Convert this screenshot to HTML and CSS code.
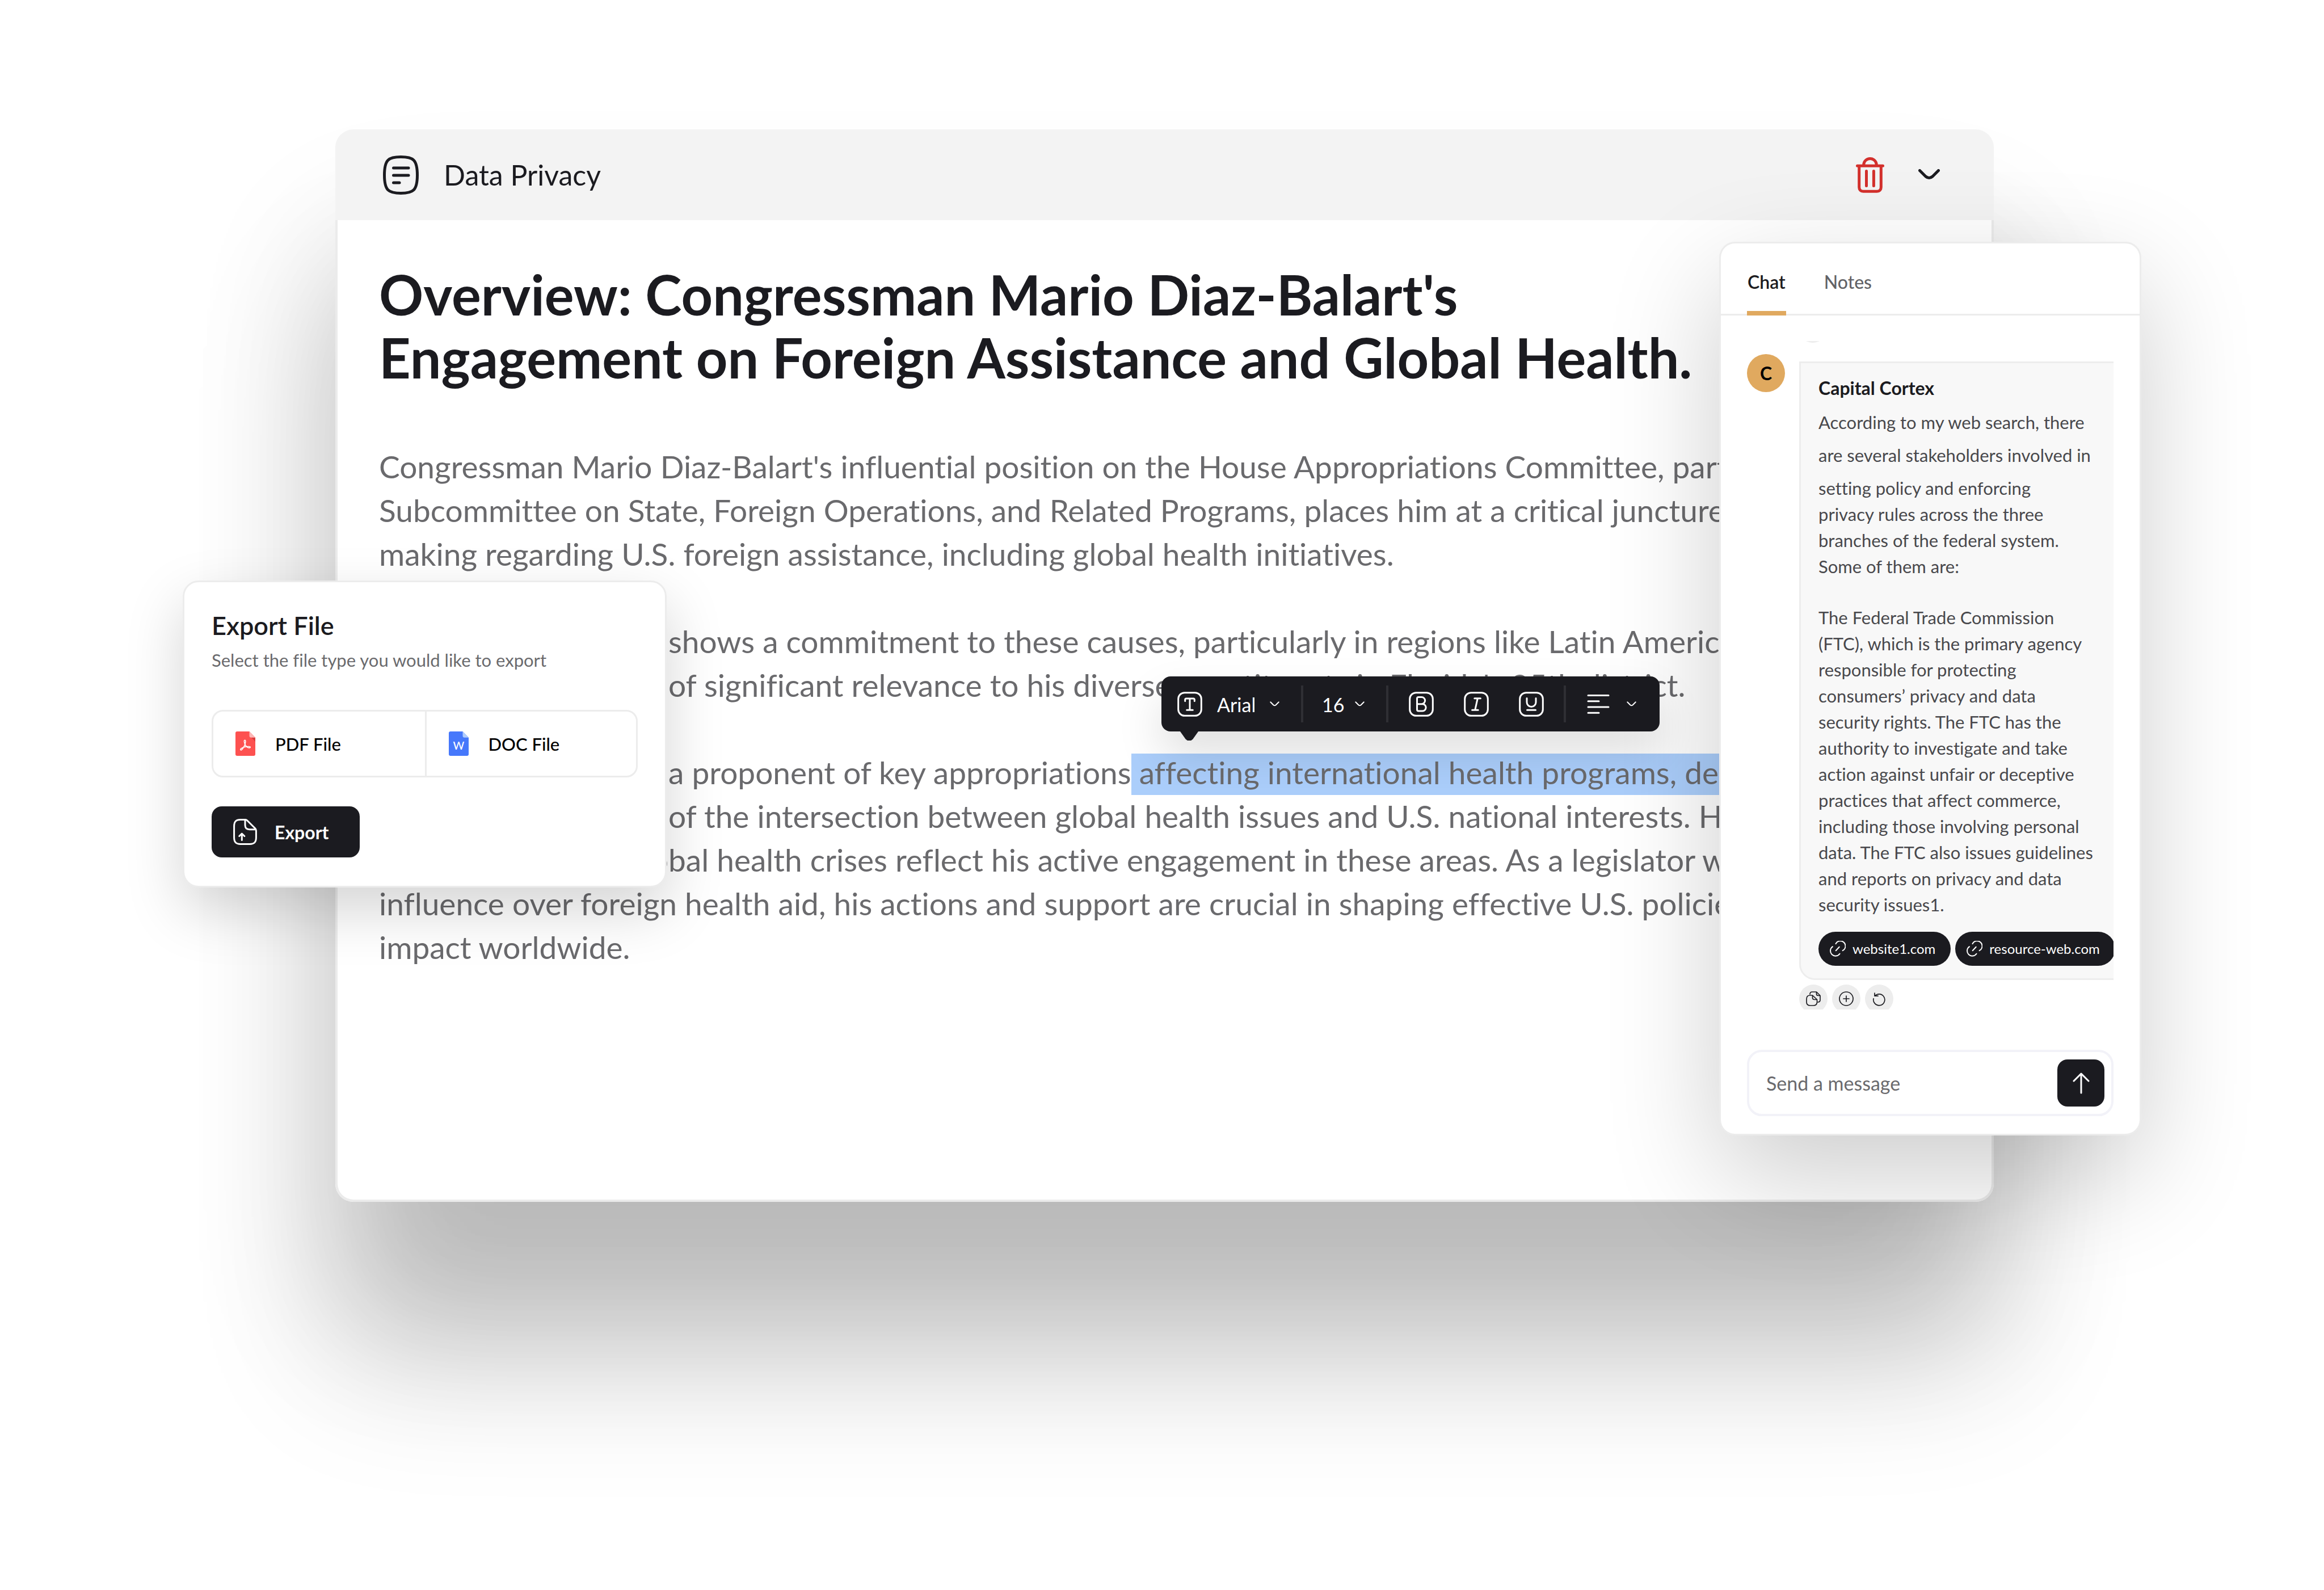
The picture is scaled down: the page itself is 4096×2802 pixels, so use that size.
FILE: index.html
```html
<!DOCTYPE html>
<html lang="en">
<head>
<meta charset="utf-8">
<meta name="viewport" content="width=device-width, initial-scale=1">
<title>Data Privacy</title>
<link rel="stylesheet" href="styles.css">
</head>
<body>
<main class="scene">

  <article class="window">
    <header class="window-bar">
      <svg class="icon" width="63" height="69" viewBox="0 0 63 69" stroke-width="5"><path d="M31.500 2.500C53 2.500 60.500 7 60.500 34.500S53 66.500 31.500 66.500 2.500 62 2.500 34.500 10 2.500 31.500 2.500z"/><path d="M18.500 22H45M18.500 35H45M18.500 48H29"/></svg>
      <span class="window-title">Data Privacy</span>
      <button class="plain danger" type="button" aria-label="Delete">
        <svg class="icon" width="50" height="63" viewBox="0 0 50 63" stroke-width="5"><path d="M13.700 14.500v-1a11.300 11 0 0 1 22.600 0v1M2.500 15.200h45M5.700 15.200V53c0 4.500 2.700 7.200 7.200 7.200h24.200c4.500 0 7.200-2.700 7.200-7.200V15.200M18.500 24.600v26M31.400 24.600v26"/></svg>
      </button>
      <button class="plain" type="button" aria-label="Collapse">
        <svg class="icon" width="38" height="20" viewBox="0 0 38 20" stroke-width="5"><path d="M2.500 2.500L13 13q6 5 12 0L35.500 2.500"/></svg>
      </button>
    </header>
    <div class="document">
      <h1>Overview: Congressman Mario Diaz-Balart's<br>Engagement on Foreign Assistance and Global Health.</h1>
      <p>Congressman Mario Diaz-Balart's influential position on the House Appropriations Committee, particularly<br>
      Subcommittee on State, Foreign Operations, and Related Programs, places him at a critical juncture of<br>
      making regarding U.S. foreign assistance, including global health initiatives.</p>
      <p><span class="lead">His record </span>shows a commitment to these causes, particularly in regions like Latin America<br>
      <span class="lead">an area </span>of significant relevance to his diverse constituents in Florida's 25th district.</p>
      <p><span class="lead">He has been </span>a proponent of key appropriations<mark> affecting international health programs, demon</mark><br>
      <span class="lead">a grasp </span>of the intersection between global health issues and U.S. national interests. His views<br>
      <span class="lead">on glo</span>bal health crises reflect his active engagement in these areas. As a legislator with<br>
      influence over foreign health aid, his actions and support are crucial in shaping effective U.S. policies that<br>
      impact worldwide.</p>
    </div>
  </article>

  <div class="toolbar" role="toolbar" aria-label="Text formatting">
    <div class="tool-group">
      <svg class="icon" width="44" height="44" viewBox="0 0 44 44" stroke-width="3"><rect x="1.700" y="1.700" width="40.600" height="40.600" rx="11"/><path d="M13.700 16.500v-2.500q0-2 2-2h12.600q2 0 2 2v2.500M22 12v20M16.700 32.200h10.600"/></svg>
      <label class="picker"><select class="font-select" aria-label="Font"><option>Arial</option></select>
        <svg class="icon" width="17" height="9" viewBox="0 0 17 9" stroke-width="2"><path d="M1.300 1.300L6.500 6.500q2 1.600 4 0L15.700 1.300"/></svg></label>
    </div>
    <div class="tool-group">
      <label class="picker size"><select class="size-select" aria-label="Font size"><option>16</option></select>
        <svg class="icon" width="17" height="9" viewBox="0 0 17 9" stroke-width="2"><path d="M1.300 1.300L6.500 6.500q2 1.600 4 0L15.700 1.300"/></svg></label>
    </div>
    <div class="tool-group styles">
      <button class="plain" type="button" aria-label="Bold"><svg class="icon" width="44" height="44" viewBox="0 0 44 44" stroke-width="3"><rect x="1.700" y="1.700" width="40.600" height="40.600" rx="11"/><path d="M14.500 21.700V12q0-2.500 2.500-2.500h5.500a6 6 0 0 1 0 12.200zM14.500 21.700h9.500a6 6 0 0 1 0 12.300H17q-2.500 0-2.500-2.500z"/></svg></button>
      <button class="plain" type="button" aria-label="Italic"><svg class="icon" width="44" height="44" viewBox="0 0 44 44" stroke-width="3"><rect x="1.700" y="1.700" width="40.600" height="40.600" rx="11"/><path d="M18.800 11.700h10.600M14.600 32.300h10.600M24.300 11.700L19.700 32.300"/></svg></button>
      <button class="plain" type="button" aria-label="Underline"><svg class="icon" width="44" height="44" viewBox="0 0 44 44" stroke-width="3"><rect x="1.700" y="1.700" width="40.600" height="40.600" rx="11"/><path d="M14 11.500V18.500a8 8 0 0 0 16 0V11.500M14.500 32.200h15"/></svg></button>
    </div>
    <div class="tool-group alignment">
      <button class="plain" type="button" aria-label="Alignment">
        <svg class="icon" width="40" height="36" viewBox="0 0 40 36" stroke-width="3"><path d="M2 2.500h36M2 12.700h19M2 22.900h36M2 33.200h19"/></svg>
        <svg class="icon" width="17" height="9" viewBox="0 0 17 9" stroke-width="2"><path d="M1.300 1.300L6.500 6.500q2 1.600 4 0L15.700 1.300"/></svg>
      </button>
    </div>
  </div>

  <section class="card export">
    <h2>Export File</h2>
    <p>Select the file type you would like to export</p>
    <div class="file-types">
      <button type="button">
        <svg width="35" height="43" viewBox="0 0 35 43"><path fill="#fd5150" d="M3 0h21.500L35 10.800V40a3 3 0 0 1-3 3H3a3 3 0 0 1-3-3V3a3 3 0 0 1 3-3z"/><path fill="#d93d3d" d="M28 10.800h7V18z"/><path fill="#fdb7b6" d="M24.500 0L35 10.800h-7.500a3 3 0 0 1-3-3z"/><path fill="none" stroke="#fff" stroke-width="1.600" stroke-linejoin="round" d="M16.800 22.500c-2-4.500-1.700-7.300-.2-7.300s1.700 3.300.2 7.300c-1.600 4.300-4 8.300-5.800 9.900-1.500 1.300-3.300-.3-1.500-2 2-1.700 5.500-3 8.700-3.500 3.500-.6 8-.7 8 .8s-3.700 1.500-5.700 0-2.700-3.200-3.700-5.200z"/></svg>
        PDF File
      </button>
      <button type="button">
        <svg width="35" height="43" viewBox="0 0 35 43"><path fill="#4678fb" d="M3 0h21.500L35 10.800V40a3 3 0 0 1-3 3H3a3 3 0 0 1-3-3V3a3 3 0 0 1 3-3z"/><path fill="#b0cdfc" d="M24.500 0L35 10.800h-7.500a3 3 0 0 1-3-3z"/><text class="doc-letter" x="17.500" y="32" text-anchor="middle">W</text></svg>
        DOC File
      </button>
    </div>
    <button class="export-button" type="button">
      <svg class="icon" width="42" height="46" viewBox="0 0 42 46" stroke-width="3"><path d="M21.500 1.600H12.500C5 1.600 1.600 5 1.600 13V33c0 8 3.400 11.400 10.900 11.400h17c7.500 0 10.900-3.400 10.900-11.400V21c0-1.500-.5-3-1.500-4L24.500 2.800c-.8-.8-1.800-1.200-3-1.200zM21 2v9c0 5 2.500 7.700 8 7.700h11M15.300 37.500V26.500M10.700 30.500l4.600-4.500 4.600 4.500"/></svg>
      Export
    </button>
  </section>

  <aside class="card chat">
    <div class="tabs" role="tablist">
      <button class="tab active" type="button" role="tab" aria-selected="true">Chat</button>
      <button class="tab" type="button" role="tab" aria-selected="false">Notes</button>
    </div>
    <div class="thread">
      <div class="actions earlier"><button type="button" aria-label="Copy earlier message"></button></div>
      <div class="message">
        <span class="avatar">C</span>
        <div class="message-main">
          <div class="bubble">
            <h3>Capital Cortex</h3>
            <p class="intro">According to my web search, there<br>are several stakeholders involved in</p>
            <p>setting policy and enforcing<br>privacy rules across the three<br>branches of the federal system.<br>Some of them are:</p>
            <p>The Federal Trade Commission<br>(FTC), which is the primary agency<br>responsible for protecting<br>consumers’ privacy and data<br>security rights. The FTC has the<br>authority to investigate and take<br>action against unfair or deceptive<br>practices that affect commerce,<br>including those involving personal<br>data. The FTC also issues guidelines<br>and reports on privacy and data<br>security issues1.</p>
            <div class="sources">
              <a href="#website1"><svg class="icon" width="28" height="28" viewBox="0 0 28 28" stroke-width="2"><path d="M5 10.200a9 9 0 1 0 12.500 12.500M10.500 5.200a9 9 0 1 1 12.200 12M10.700 17.200l6-6.500"/></svg>website1.com</a>
              <a href="#resource-web"><svg class="icon" width="28" height="28" viewBox="0 0 28 28" stroke-width="2"><path d="M5 10.200a9 9 0 1 0 12.500 12.500M10.500 5.200a9 9 0 1 1 12.200 12M10.700 17.200l6-6.500"/></svg>resource-web.com</a>
            </div>
          </div>
          <div class="actions">
            <button type="button" aria-label="Copy"><svg class="icon" width="26" height="26" viewBox="0 0 26 26" stroke-width="1.700"><path d="M11.500 7h-4C3 7 1 9 1 13.500V19c0 4.500 2 6 6.500 6H13c4.500 0 6.500-1.500 6.500-6v-4.500zM11.500 7v4c0 2.500 1 3.500 3.500 3.500h4.500M7 5C7 2 8.500 1 11 1h7.500L25 7.500V15c0 2.800-1.200 4-4 4M18.500 1v3.500c0 2 1 3 3 3H25"/></svg></button>
            <button type="button" aria-label="Add"><svg class="icon" width="26" height="26" viewBox="0 0 26 26" stroke-width="1.700"><circle cx="13" cy="13" r="12"/><path d="M13 8v10M8 13h10"/></svg></button>
            <button type="button" aria-label="Retry"><svg class="icon" width="26" height="26" viewBox="0 0 26 26" stroke-width="1.700"><path d="M5 3v5.200h6M5.300 8.200A10 10 0 1 1 3 12.800"/></svg></button>
          </div>
        </div>
      </div>
    </div>
    <form class="composer">
      <input type="text" placeholder="Send a message" aria-label="Send a message">
      <button type="button" aria-label="Send"><svg class="icon" width="30" height="38" viewBox="0 0 30 38" stroke-width="3"><path d="M15 36V2M2 15L15 2l13 13"/></svg></button>
    </form>
  </aside>

</main>
</body>
</html>
```
FILE: styles.css
```css
* { box-sizing: border-box; }

body {
  margin: 0;
  background: #fff;
  color: #1b1b20;
  font-family: Lato, "Open Sans", sans-serif;
  font-size: 30px;
  font-variant-ligatures: none;
}

h1, h2, h3, p { margin: 0; }

button, input, select {
  margin: 0;
  padding: 0;
  border: 0;
  background: none;
  color: inherit;
  font: inherit;
}

.icon {
  display: block;
  flex: none;
  fill: none;
  stroke: currentColor;
  stroke-linecap: round;
  stroke-linejoin: round;
}

.plain { display: flex; align-items: center; }

.scene {
  position: relative;
  min-height: 100vh;
  padding: 228px 582px 400px 591px;
  overflow: hidden;
}

/* Document window */
.window {
  border-radius: 32px;
  background: #fff;
  box-shadow: 0 200px 320px rgba(0, 0, 0, 0.14), 0 280px 600px rgba(0, 0, 0, 0.16);
}

.window-bar {
  display: flex;
  align-items: center;
  height: 160px;
  padding: 0 95px 0 84px;
  border-radius: 32px 32px 0 0;
  background: #f3f3f3;
}

.window-title {
  flex: 1;
  margin-left: 44px;
  font-size: 50px;
}

.danger { margin-right: 60px; color: #d3302c; }

.document {
  padding: 75px 73px 406px;
  border: 4px solid #ebebeb;
  border-top: 0;
  border-radius: 0 0 32px 32px;
  overflow: hidden;
  white-space: nowrap;
}

.document h1 {
  margin-bottom: 99px;
  font-size: 97px;
  font-weight: 700;
  line-height: 111px;
}

.document p {
  color: #6a6a6d;
  font-size: 55px;
  line-height: 77px;
}

.document p + p { margin-top: 77px; }

.document mark {
  padding-bottom: 7px;
  background: #abcefb;
  color: inherit;
}

.lead {
  display: inline-block;
  width: 510px;
  text-align: right;
  white-space: pre;
}

/* Formatting toolbar */
.toolbar {
  position: absolute;
  top: 1192px;
  left: 2047px;
  display: flex;
  align-items: center;
  height: 97px;
  border-radius: 16px;
  background: #1b1b20;
  color: #fff;
  box-shadow: 0 40px 80px rgba(0, 0, 0, 0.13);
}

.toolbar::after {
  content: "";
  position: absolute;
  top: 97px;
  left: 33px;
  width: 32px;
  height: 16px;
  background: #1b1b20;
  clip-path: polygon(0 0, 100% 0, 70% 84%, 60% 100%, 40% 100%, 30% 84%);
}

.tool-group {
  display: flex;
  align-items: center;
  gap: 26px;
  height: 65px;
  padding: 0 38px 0 33px;
  border-left: 4px solid #2f2f34;
}

.tool-group:first-child { padding-left: 28px; border-left: 0; }
.tool-group.styles { gap: 53px; padding: 0 35px 0 36px; }
.tool-group.alignment { padding: 0 41px 0 37px; }
.tool-group.alignment button { gap: 30px; }

.picker { display: flex; align-items: center; gap: 27px; }
.picker.size { gap: 18px; }

.picker select {
  appearance: none;
  padding-top: 2px;
  font-size: 34px;
  line-height: 44px;
}

.font-select { width: 66px; }
.size-select { width: 40px; }

/* Cards */
.card {
  position: absolute;
  border: 3px solid #ececec;
  border-radius: 28px;
  background: #fff;
}

.export {
  top: 1023px;
  left: 322px;
  width: 853px;
  padding: 46px 48px 50px;
  box-shadow: 0 40px 100px rgba(0, 0, 0, 0.17);
}

.export h2 {
  font-size: 45px;
  font-weight: 600;
  line-height: 60px;
}

.export p {
  margin-top: 9px;
  color: #6a6a6d;
  font-size: 31px;
  line-height: 44px;
}

.file-types {
  display: grid;
  grid-template-columns: 1fr 1fr;
  margin-top: 66px;
  border: 3px solid #ececec;
  border-radius: 20px;
}

.file-types button {
  display: flex;
  align-items: center;
  gap: 35px;
  height: 113px;
  padding-left: 39px;
  color: #000;
  font-size: 31px;
  font-weight: 500;
}

.file-types button + button { border-left: 3px solid #ececec; }

.doc-letter { fill: #fff; font-size: 19px; }

.export-button {
  display: flex;
  align-items: center;
  gap: 31px;
  width: 261px;
  height: 90px;
  margin-top: 51px;
  padding-left: 38px;
  border-radius: 18px;
  background: #1b1b20;
  color: #fff;
  font-size: 32px;
  font-weight: 700;
}

.chat {
  top: 426px;
  right: 322px;
  width: 744px;
  padding-bottom: 31px;
  box-shadow: 0 70px 200px rgba(0, 0, 0, 0.2);
}

.tabs {
  display: flex;
  gap: 66px;
  height: 127px;
  padding: 0 46px;
  border-bottom: 3px solid #ececec;
}

.tab {
  margin-bottom: -3px;
  padding: 8px 1px 0;
  border-top: 8px solid transparent;
  border-bottom: 8px solid transparent;
  color: #626266;
  font-size: 32px;
  font-weight: 500;
}

.tab.active { border-bottom-color: #e0a95f; color: #1b1b20; font-weight: 600; }

.thread {
  height: 1178px;
  margin: 45px 46px 0;
  overflow: hidden;
}

.actions { display: flex; gap: 8px; margin-top: 8px; }

.actions button {
  display: flex;
  align-items: center;
  justify-content: center;
  width: 50px;
  height: 50px;
  border-radius: 50%;
  background: #ededed;
}

.actions.earlier { margin: -47px 0 20px 91px; }

.message { display: flex; gap: 25px; }

.avatar {
  display: flex;
  flex: none;
  align-items: center;
  justify-content: center;
  width: 67px;
  height: 67px;
  border-radius: 50%;
  background: #e0a95f;
  color: #000;
  font-size: 32px;
  font-weight: 700;
}

.message-main { flex: 0 0 600px; margin-top: 13px; }

.bubble {
  padding: 24px 31px 22px;
  border: 3px solid #ededed;
  border-radius: 0 28px 28px 28px;
  background: #f8f8f8;
  color: #48484c;
  font-size: 31px;
  line-height: 46px;
  white-space: nowrap;
}

.bubble h3 {
  margin-bottom: 11px;
  color: #1b1b20;
  font-size: 32px;
  font-weight: 700;
  line-height: 40px;
}

.bubble p + p { margin-top: 44px; }
.bubble .intro { line-height: 58px; }
.bubble .intro + p { margin-top: 6px; }

.sources { display: flex; gap: 8px; margin-top: 25px; }

.sources a {
  display: flex;
  flex: none;
  align-items: center;
  gap: 12px;
  height: 60px;
  padding: 0 27px 0 20px;
  border-radius: 30px;
  background: #1b1b20;
  color: #fff;
  font-size: 24px;
  text-decoration: none;
}

.composer {
  display: flex;
  align-items: center;
  height: 117px;
  margin: 71px 46px 0;
  padding: 0 12px 0 30px;
  border: 4px solid #f2f2f8;
  border-radius: 26px;
}

.composer input {
  flex: 1;
  min-width: 0;
  font-size: 34px;
}

.composer input::placeholder { color: #6a6a6d; opacity: 1; }

.composer button {
  display: flex;
  align-items: center;
  justify-content: center;
  width: 83px;
  height: 83px;
  border-radius: 18px;
  background: #1b1b20;
  color: #fff;
}
```
